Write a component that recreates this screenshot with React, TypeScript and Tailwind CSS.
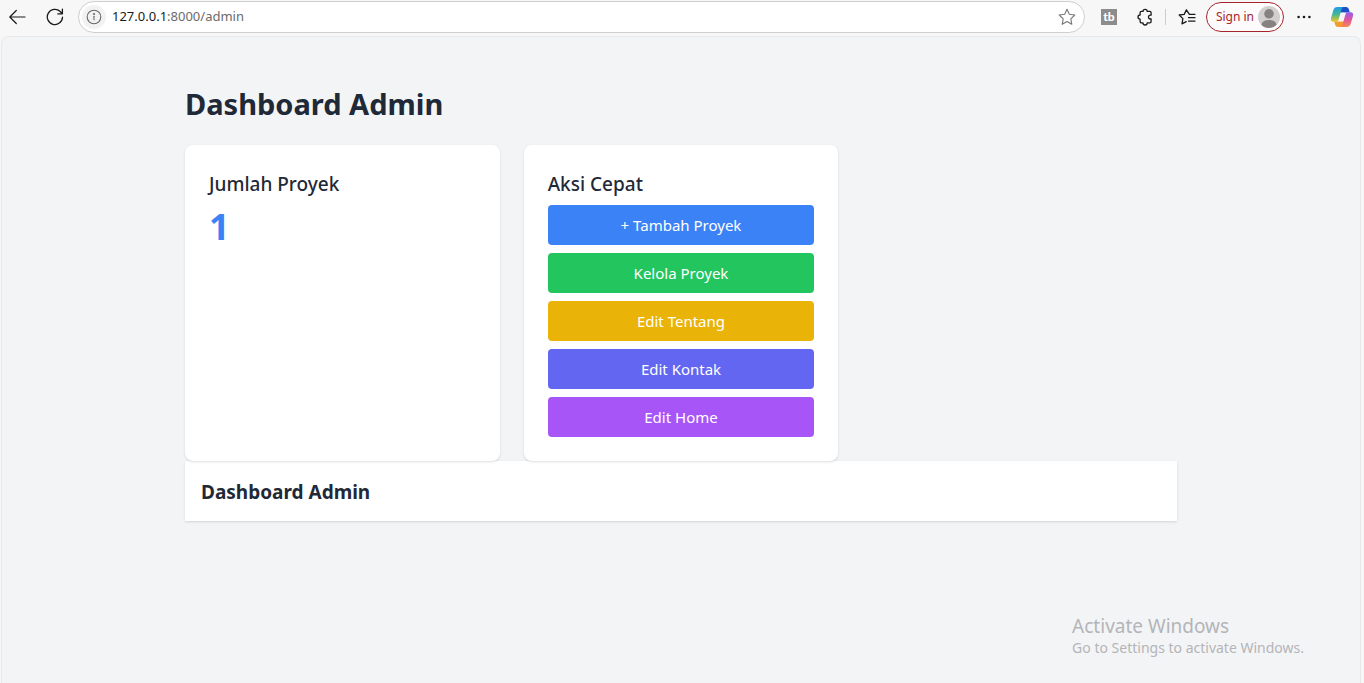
import React from "react";

const actions = [
  { label: "+ Tambah Proyek", href: "#tambah", color: "bg-[#3b82f6]" },
  { label: "Kelola Proyek", href: "#kelola", color: "bg-[#22c55e]" },
  { label: "Edit Tentang", href: "#tentang", color: "bg-[#eab308]" },
  { label: "Edit Kontak", href: "#kontak", color: "bg-[#6366f1]" },
  { label: "Edit Home", href: "#home", color: "bg-[#a855f7]" },
];

const iconProps = {
  fill: "none",
  stroke: "currentColor",
  strokeLinecap: "round" as const,
  strokeLinejoin: "round" as const,
  "aria-hidden": true,
};

function BackIcon() {
  return (
    <svg {...iconProps} width="18" height="18" viewBox="0 0 18 18" strokeWidth="1.2">
      <path d="M17 9H1.8M8.3 2.5L1.8 9l6.5 6.5" />
    </svg>
  );
}

function ReloadIcon() {
  return (
    <svg {...iconProps} width="18" height="18" viewBox="0 0 18 18" strokeWidth="1.3">
      <path d="M16.5 9.2A7.6 7.6 0 1 1 14.2 3.5L16.4 5.7M16.4 1.2v4.6h-4.6" />
    </svg>
  );
}

function InfoIcon() {
  return (
    <svg {...iconProps} width="16" height="16" viewBox="0 0 16 16" strokeWidth="1.1">
      <circle cx="8" cy="8" r="6.8" />
      <path d="M8 7.3v3.5" />
      <circle cx="8" cy="5" r=".5" fill="currentColor" />
    </svg>
  );
}

function StarIcon() {
  return (
    <svg {...iconProps} width="18" height="18" viewBox="0 0 18 18" strokeWidth="1.1">
      <path d="M9 1.3l2.3 5 5.5.7-4 3.8 1 5.5L9 13.6l-4.8 2.7 1-5.5-4-3.8 5.5-.7z" />
    </svg>
  );
}

function ExtensionIcon() {
  return (
    <svg {...iconProps} width="16" height="18" viewBox="0 0 16 18" strokeWidth="1.3">
      <path d="M6 3.4a2.1 2.1 0 0 1 4.2 0h2.6a1.3 1.3 0 0 1 1.3 1.3v2.5h-.7a1.9 1.9 0 0 0 0 3.8h.7v2.6a1.3 1.3 0 0 1-1.3 1.3h-2.6a2.1 2.1 0 0 1-4.2 0H4.4a1.3 1.3 0 0 1-1.3-1.3v-2.4a2.1 2.1 0 0 1 0-4.2V4.7a1.3 1.3 0 0 1 1.3-1.3z" />
    </svg>
  );
}

function FavoritesIcon() {
  return (
    <svg {...iconProps} width="18" height="18" viewBox="0 0 18 18" strokeWidth="1.3">
      <path d="M17 6.3h-5.6L8.4 1.8 6.2 6.4 1.2 7l3.7 3.6L4 15.8l4.2-2.2M10.5 9.7H17M10.5 13.1H17" />
    </svg>
  );
}

function ProfileIcon() {
  return (
    <svg width="22" height="22" viewBox="0 0 22 22" aria-hidden="true">
      <circle cx="11" cy="11" r="11" fill="#d2d0ce" />
      <circle cx="11" cy="7.8" r="4.8" fill="#85827f" />
      <path d="M3.3 18.7C4.2 15.4 7 14 11 14s6.8 1.4 7.7 4.7A11 11 0 0 1 11 22a11 11 0 0 1-7.7-3.3z" fill="#85827f" />
    </svg>
  );
}

function CopilotIcon() {
  return (
    <svg width="24" height="22" viewBox="0 0 24 22" aria-hidden="true">
      <defs>
        <linearGradient id="cp-left" x1="0" y1="0" x2="0" y2="1">
          <stop offset="0" stopColor="#1c9be8" />
          <stop offset=".5" stopColor="#45b795" />
          <stop offset="1" stopColor="#f2c51d" />
        </linearGradient>
        <linearGradient id="cp-right" x1="0" y1="0" x2="0" y2="1">
          <stop offset="0" stopColor="#9a5cf0" />
          <stop offset=".5" stopColor="#df569f" />
          <stop offset="1" stopColor="#f9884c" />
        </linearGradient>
      </defs>
      <path d="M11 1h5c1.6 0 2.4.9 2.9 2.5l.9 3H10z" fill="#1b50c8" />
      <path d="M13 21H8c-1.6 0-2.4-.9-2.9-2.5l-.9-3H14z" fill="#f59a2e" />
      <path d="M7.5 1h6.2c-1.3.3-1.9 1.3-2.3 2.7L8.9 12.6c-.6 2.2-1.4 3.1-3.2 3.1H3.5C1.2 15.7.5 14.2 1 12L3.3 4.3C4 2 5.2 1 7.5 1z" fill="url(#cp-left)" />
      <path d="M16.5 21h-6.2c1.3-.3 1.9-1.3 2.3-2.7l2.5-8.9c.6-2.2 1.4-3.1 3.2-3.1h2.2c2.3 0 3 1.5 2.5 3.7l-2.3 7.7c-.7 2.3-1.9 3.3-4.2 3.3z" fill="url(#cp-right)" />
      <path d="M11.6 6.8h3.2c-.5.5-.8 1.2-1 2l-1.3 4.7c-.3 1.1-.9 1.8-2 1.8H8.8c.5-.6.8-1.3 1-2.1l1.2-4.5c.2-.8.4-1.4.6-1.9z" fill="#f7f7f7" />
    </svg>
  );
}

function BrowserBar() {
  return (
    <header className="flex h-9 items-center pr-[10px] pb-[2px] pl-2 text-[#1b1b1b]">
      <button type="button" aria-label="Back" className="mr-5">
        <BackIcon />
      </button>
      <button type="button" aria-label="Reload" className="mr-[14px]">
        <ReloadIcon />
      </button>
      <div className="flex h-8 min-w-0 flex-1 items-center rounded-full border border-[#cfcfcf] bg-white pr-2 pl-[3px]">
        <button
          type="button"
          aria-label="Site information"
          className="flex size-6 items-center justify-center rounded-full bg-[#f2f2f2] text-[#6a6a6a]"
        >
          <InfoIcon />
        </button>
        <a href="#address" className="ml-[6px] flex-1 text-[13px] text-[#6b6b6b]">
          <span className="text-[#1b1b1b]">127.0.0.1</span>:8000/admin
        </a>
        <button type="button" aria-label="Add to favorites" className="text-[#777777]">
          <StarIcon />
        </button>
      </div>
      <button
        type="button"
        aria-label="TubeBuddy"
        className="ml-4 flex size-4 items-center justify-center bg-[#8c8c8c] font-['Lato',sans-serif] text-[12px] leading-4 font-black text-white"
      >
        tb
      </button>
      <button type="button" aria-label="Extensions" className="ml-5">
        <ExtensionIcon />
      </button>
      <div className="mx-3 h-4 w-px bg-[#cccccc]" />
      <button type="button" aria-label="Favorites">
        <FavoritesIcon />
      </button>
      <button
        type="button"
        className="ml-[10px] flex h-[30px] items-center gap-1 rounded-full border border-[#a4262c] bg-[#fdfbfb] pr-[3px] pl-[9px] text-[12px] whitespace-nowrap text-[#a4262c]"
      >
        Sign in
        <ProfileIcon />
      </button>
      <button type="button" aria-label="Settings and more" className="ml-3">
        <svg width="16" height="16" viewBox="0 0 16 16" fill="#1b1b1b" aria-hidden="true">
          <circle cx="2.6" cy="8" r="1.3" />
          <circle cx="8" cy="8" r="1.3" />
          <circle cx="13.4" cy="8" r="1.3" />
        </svg>
      </button>
      <button type="button" aria-label="Copilot" className="ml-[18px]">
        <CopilotIcon />
      </button>
    </header>
  );
}

export default function App() {
  return (
    <div className="flex min-h-screen flex-col bg-[#f7f7f7] font-['Segoe_UI','Noto_Sans',sans-serif]">
      <BrowserBar />
      <div className="mr-[3px] ml-px flex-1 rounded-t-lg border border-b-0 border-[#e8e9eb] bg-[#f3f4f6] text-[#1f2937]">
        <main className="mx-auto max-w-5xl px-4 py-12">
          <h1 className="mb-[22px] text-[29px] leading-[38px] font-bold">Dashboard Admin</h1>
          <div className="grid grid-cols-3 gap-6">
            <section className="rounded-lg bg-white p-6 shadow-sm">
              <h2 className="mb-[6px] text-[19px] leading-[30px] font-medium">Jumlah Proyek</h2>
              <p className="text-4xl leading-[44px] font-bold text-[#3b82f6]">1</p>
            </section>
            <section className="rounded-lg bg-white p-6 shadow-sm">
              <h2 className="mb-[6px] text-[19px] leading-[30px] font-medium">Aksi Cepat</h2>
              <nav className="flex flex-col gap-2">
                {actions.map((action) => (
                  <a
                    key={action.label}
                    href={action.href}
                    className={`rounded-sm px-4 py-2 text-center text-[15px] leading-6 text-white ${action.color}`}
                  >
                    {action.label}
                  </a>
                ))}
              </nav>
            </section>
          </div>
          <div className="bg-white px-4 pt-4 pb-[14px] shadow-sm">
            <h2 className="text-[19px] leading-[30px] font-bold">Dashboard Admin</h2>
          </div>
        </main>
      </div>
      <aside className="pointer-events-none absolute right-[60px] bottom-[25px] text-[#b3b5b8]">
        <p className="text-[19px] leading-6">Activate Windows</p>
        <p className="text-sm">Go to Settings to activate Windows.</p>
      </aside>
    </div>
  );
}
